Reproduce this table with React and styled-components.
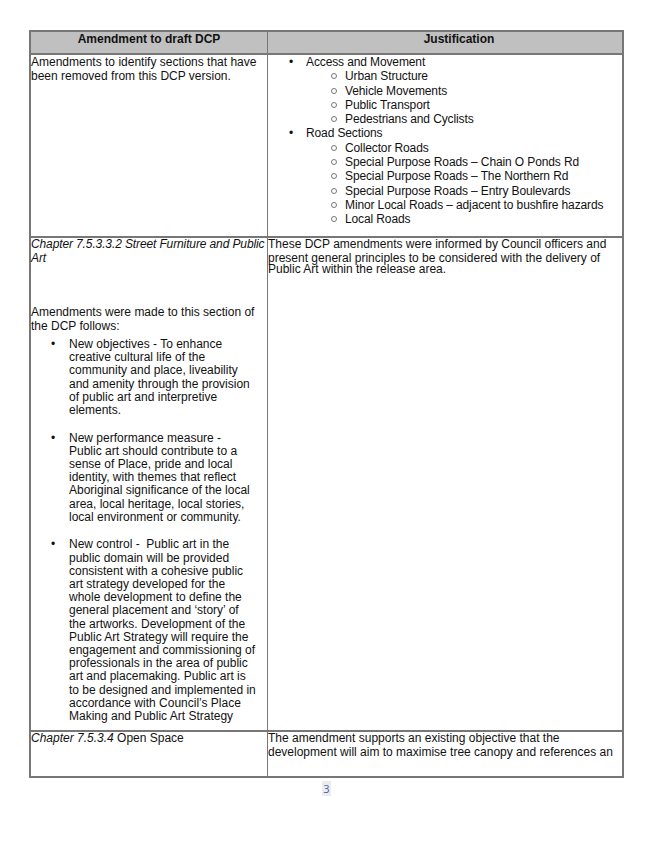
import React from 'react';
import styled, { createGlobalStyle } from 'styled-components';

const GlobalStyle = createGlobalStyle`
  html, body {
    margin: 0;
    padding: 0;
    background: #ffffff;
  }
  body {
    font-family: "Liberation Sans", Arial, sans-serif;
    font-size: 12px;
    color: #111111;
  }
`

const Page = styled.div`
  width: 656px;
  min-height: 849px;
  box-sizing: border-box;
  padding: 30px 0 0 29px;
`
const Table = styled.div`
  display: grid;
  grid-template-columns: 236px 354px;
  grid-template-rows: 21px 181px 492px 44px;
  column-gap: 1px;
  row-gap: 2px;
  width: 595px;
  box-sizing: border-box;
  padding: 2px;
  background: #777777;
`
const HeadCell = styled.div`
  background: #c0c0c0;
  font-weight: bold;
  text-align: center;
  line-height: 14px;
  padding-left: ${(p) => p.$shift || 0}px;
`
const Cell = styled.div`
  background: #ffffff;
  white-space: nowrap;
  letter-spacing: ${(p) => p.$ls || 0}px;
`
const Para = styled.div`
  margin-top: ${(p) => p.$mt || 0}px;
  line-height: ${(p) => p.$lh || 14.3}px;
  font-style: ${(p) => (p.$italic ? 'italic' : 'normal')};
  letter-spacing: ${(p) => p.$ls || 0}px;
`
const Line = styled.div`
  line-height: ${(p) => p.$lh || 14}px;
  height: ${(p) => p.$lh || 14}px;
`
const Item = styled.div`
  display: flex;
  padding-left: ${(p) => p.$indent}px;
  margin-top: ${(p) => p.$mt || 0}px;
  line-height: ${(p) => p.$lh || 14.3}px;
`
const Marker = styled.div`
  flex: none;
  width: ${(p) => p.$w}px;
`
const Circle = styled.span`
  display: inline-block;
  width: 4px;
  height: 4px;
  margin-left: 3px;
  border: 1px solid #777777;
  border-radius: 50%;
  vertical-align: 1px;
`
const PageNum = styled.div`
  width: 595px;
  margin-top: 4px;
  text-align: center;
  font-family: "Open Sans", "Liberation Sans", sans-serif;
  font-size: 11px;
  line-height: 14px;
  color: #3f66b0;
`
const NumBox = styled.span`
  background: #ececec;
  padding: 0 1px;
`

const accessItems = [
  'Urban Structure',
  'Vehicle Movements',
  'Public Transport',
  'Pedestrians and Cyclists',
];
const roadItems = [
  'Collector Roads',
  'Special Purpose Roads – Chain O Ponds Rd',
  'Special Purpose Roads – The Northern Rd',
  'Special Purpose Roads – Entry Boulevards',
  'Minor Local Roads – adjacent to bushfire hazards',
  'Local Roads',
];

const amendments = [
  [
    'New objectives - To enhance',
    'creative cultural life of the',
    'community and place, liveability',
    'and amenity through the provision',
    'of public art and interpretive',
    'elements.',
  ],
  [
    'New performance measure -',
    'Public art should contribute to a',
    'sense of Place, pride and local',
    'identity, with themes that reflect',
    'Aboriginal significance of the local',
    'area, local heritage, local stories,',
    'local environment or community.',
  ],
  [
    'New control -\u00a0 Public art in the',
    'public domain will be provided',
    'consistent with a cohesive public',
    'art strategy developed for the',
    'whole development to define the',
    'general placement and ‘story’ of',
    'the artworks. Development of the',
    'Public Art Strategy will require the',
    'engagement and commissioning of',
    'professionals in the area of public',
    'art and placemaking. Public art is',
    'to be designed and implemented in',
    'accordance with Council’s Place',
    'Making and Public Art Strategy',
  ],
];

function SubList({ items }) {
  return items.map((text) => (
    <Item key={text} $indent={60}>
      <Marker $w={17}><Circle /></Marker>
      <div>{text}</div>
    </Item>
  ));
}

export default function App() {
  return (
    <Page>
      <GlobalStyle />
      <Table>
        <HeadCell>Amendment to draft DCP</HeadCell>
        <HeadCell $shift={28}>Justification</HeadCell>

        <Cell>
          <Para>
            <Line $lh={14.3}>Amendments to identify sections that have</Line>
            <Line $lh={14.3}>been removed from this DCP version.</Line>
          </Para>
        </Cell>
        <Cell $ls={-0.12}>
          <Item $indent={21}>
            <Marker $w={17}>•</Marker>
            <div>Access and Movement</div>
          </Item>
          <SubList items={accessItems} />
          <Item $indent={21}>
            <Marker $w={17}>•</Marker>
            <div>Road Sections</div>
          </Item>
          <SubList items={roadItems} />
        </Cell>

        <Cell>
          <Para $italic $mt={-1} $lh={14} $ls={-0.12}>
            <Line>Chapter 7.5.3.3.2 Street Furniture and Public</Line>
            <Line>Art</Line>
          </Para>
          <Para $mt={40} $lh={14}>
            <Line>Amendments were made to this section of</Line>
            <Line>the DCP follows:</Line>
          </Para>
          {amendments.map((lines, i) => (
            <Item key={i} $indent={20} $mt={i === 0 ? 5 : 14.5} $lh={13.2}>
              <Marker $w={18}>•</Marker>
              <div>
                {lines.map((l) => (
                  <Line key={l} $lh={13.2}>{l}</Line>
                ))}
              </div>
            </Item>
          ))}
        </Cell>
        <Cell>
          <Para $mt={-1}>
            <Line>These DCP amendments were informed by Council officers and</Line>
            <Line>present general principles to be considered with the delivery of</Line>
            <Line $lh={9}>Public Art within the release area.</Line>
          </Para>
        </Cell>

        <Cell>
          <Para $lh={12}>
            <i>Chapter 7.5.3.4</i> Open Space
          </Para>
        </Cell>
        <Cell>
          <Para $mt={-1} $lh={14}>
            <Line>The amendment supports an existing objective that the</Line>
            <Line>development will aim to maximise tree canopy and references an</Line>
          </Para>
        </Cell>
      </Table>
      <PageNum><NumBox>3</NumBox></PageNum>
    </Page>
  );
}
